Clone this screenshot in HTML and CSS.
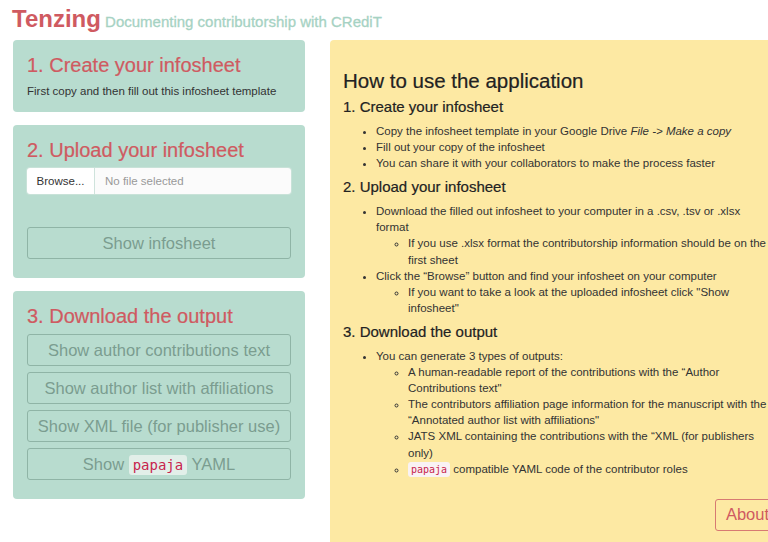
FILE: index.html
```html
<!DOCTYPE html>
<html lang="en">
<head>
<meta charset="utf-8">
<title>Tenzing</title>
<link rel="stylesheet" href="styles.css">
</head>
<body>
<header class="masthead">
  <h1 class="brand">Tenzing<span class="tagline"> Documenting contributorship with CRediT</span></h1>
</header>
<main class="layout">
  <aside class="sidebar">
    <section class="well">
      <h2 class="well-title">1. Create your infosheet</h2>
      <p class="well-text">First copy and then fill out this infosheet template</p>
    </section>
    <section class="well">
      <h2 class="well-title">2. Upload your infosheet</h2>
      <div class="file-input">
        <span class="file-browse">Browse...</span>
        <span class="file-name">No file selected</span>
      </div>
      <div class="progress-space"></div>
      <button class="btn">Show infosheet</button>
    </section>
    <section class="well">
      <h2 class="well-title">3. Download the output</h2>
      <button class="btn">Show author contributions text</button>
      <button class="btn">Show author list with affiliations</button>
      <button class="btn">Show XML file (for publisher use)</button>
      <button class="btn">Show <code class="code code-btn">papaja</code> YAML</button>
    </section>
  </aside>
  <section class="guide">
    <h2 class="guide-title">How to use the application</h2>
    <h3 class="guide-step">1. Create your infosheet</h3>
    <ul class="list">
      <li>Copy the infosheet template in your Google Drive <em>File -&gt; Make a copy</em></li>
      <li>Fill out your copy of the infosheet</li>
      <li>You can share it with your collaborators to make the process faster</li>
    </ul>
    <h3 class="guide-step">2. Upload your infosheet</h3>
    <ul class="list">
      <li>Download the filled out infosheet to your computer in a .csv, .tsv or .xlsx format
        <ul class="sublist">
          <li>If you use .xlsx format the contributorship information should be on the first sheet</li>
        </ul>
      </li>
      <li>Click the “Browse” button and find your infosheet on your computer
        <ul class="sublist">
          <li>If you want to take a look at the uploaded infosheet click "Show infosheet"</li>
        </ul>
      </li>
    </ul>
    <h3 class="guide-step">3. Download the output</h3>
    <ul class="list">
      <li>You can generate 3 types of outputs:
        <ul class="sublist">
          <li>A human-readable report of the contributions with the “Author Contributions text"</li>
          <li>The contributors affiliation page information for the manuscript with the “Annotated author list with affiliations"</li>
          <li>JATS XML containing the contributions with the “XML (for publishers only)</li>
          <li><code class="code">papaja</code> compatible YAML code of the contributor roles</li>
        </ul>
      </li>
    </ul>
    <div class="guide-footer">
      <button class="btn-about">About</button>
    </div>
  </section>
</main>
</body>
</html>
```

FILE: styles.css
```css
html, body {
  margin: 0;
  padding: 0;
  overflow: hidden;
  background: #ffffff;
}

body {
  font-family: "Liberation Sans", Arial, Helvetica, sans-serif;
  color: #333333;
  width: 768px;
  height: 542px;
}

.masthead {
  padding: 5px 12px 0;
  height: 35px;
  box-sizing: border-box;
}

.brand {
  margin: 0;
  font-size: 24px;
  font-weight: bold;
  color: #cf5a61;
  line-height: 28px;
  white-space: nowrap;
}

.tagline {
  font-size: 15px;
  font-weight: normal;
  color: #a6d2c3;
  -webkit-text-stroke: 0.3px #a6d2c3;
}

.layout {
  display: flex;
  align-items: flex-start;
  gap: 25px;
  padding-left: 13px;
  padding-top: 5px;
}

.sidebar {
  width: 292px;
  flex: none;
  display: flex;
  flex-direction: column;
  gap: 13px;
}

.well {
  background: #b8dccf;
  border-radius: 4px;
  padding: 14px 14px 13px;
  display: flex;
  flex-direction: column;
}

.well-title {
  margin: 0 0 7px;
  font-size: 20px;
  line-height: 22px;
  font-weight: normal;
  color: #cf5a61;
  -webkit-text-stroke: 0.2px #cf5a61;
}

.well-text {
  margin: 0;
  font-size: 11.5px;
  line-height: 16px;
  color: #333333;
}

.file-input {
  display: flex;
  height: 26px;
  border-radius: 3px;
  overflow: hidden;
  font-size: 11.5px;
  box-shadow: 0 0 0 1px #c8e2d8;
}

.file-browse {
  width: 67px;
  flex: none;
  background: #ffffff;
  color: #333333;
  display: flex;
  align-items: center;
  justify-content: center;
  border-right: 1px solid #cfe3dc;
}

.file-name {
  flex: 1;
  background: #fbfbfb;
  color: #999999;
  display: flex;
  align-items: center;
  padding-left: 10px;
}

.progress-space {
  height: 33px;
}

.btn {
  display: block;
  width: 100%;
  height: 32px;
  margin: 0 0 6px;
  padding: 0;
  background: transparent;
  border: 1px solid #8fb4a6;
  border-radius: 3px;
  font-family: "Liberation Sans", Arial, Helvetica, sans-serif;
  font-size: 16.5px;
  color: #7b9d90;
  cursor: pointer;
}

.code {
  font-family: "DejaVu Sans Mono", "Liberation Mono", monospace;
  font-size: 10px;
  color: #c7254e;
  background: #f9f2f4;
  border-radius: 3px;
  padding: 2px 3px;
}

.code-btn {
  font-size: 14px;
  background: #e2efe9;
  padding: 2px 4px;
}

.guide {
  width: 467px;
  flex: none;
  background: #fde9a3;
  border-radius: 4px;
  padding: 29px 13px 40px;
  min-height: 520px;
  box-sizing: border-box;
}

.guide-title {
  margin: 0 0 4px;
  font-size: 20.5px;
  line-height: 24px;
  font-weight: normal;
  color: #222222;
  -webkit-text-stroke: 0.2px #222222;
}

.guide-step {
  margin: 0 0 6px;
  font-size: 15px;
  line-height: 20px;
  font-weight: normal;
  color: #222222;
  -webkit-text-stroke: 0.2px #222222;
}

.list {
  margin: 0 14px 6px 0;
  padding-left: 33px;
  font-size: 11.5px;
  line-height: 1.4;
  color: #333333;
}

.sublist {
  margin: 0;
  padding-left: 32px;
  list-style-type: circle;
}

.guide-footer {
  display: flex;
  justify-content: flex-end;
  padding-top: 16px;
}

.btn-about {
  height: 32px;
  margin-right: 4px;
  padding: 0 10px;
  background: transparent;
  border: 1px solid #d77a72;
  border-radius: 3px;
  font-family: "Liberation Sans", Arial, Helvetica, sans-serif;
  font-size: 16.5px;
  color: #cf5a61;
}
```
